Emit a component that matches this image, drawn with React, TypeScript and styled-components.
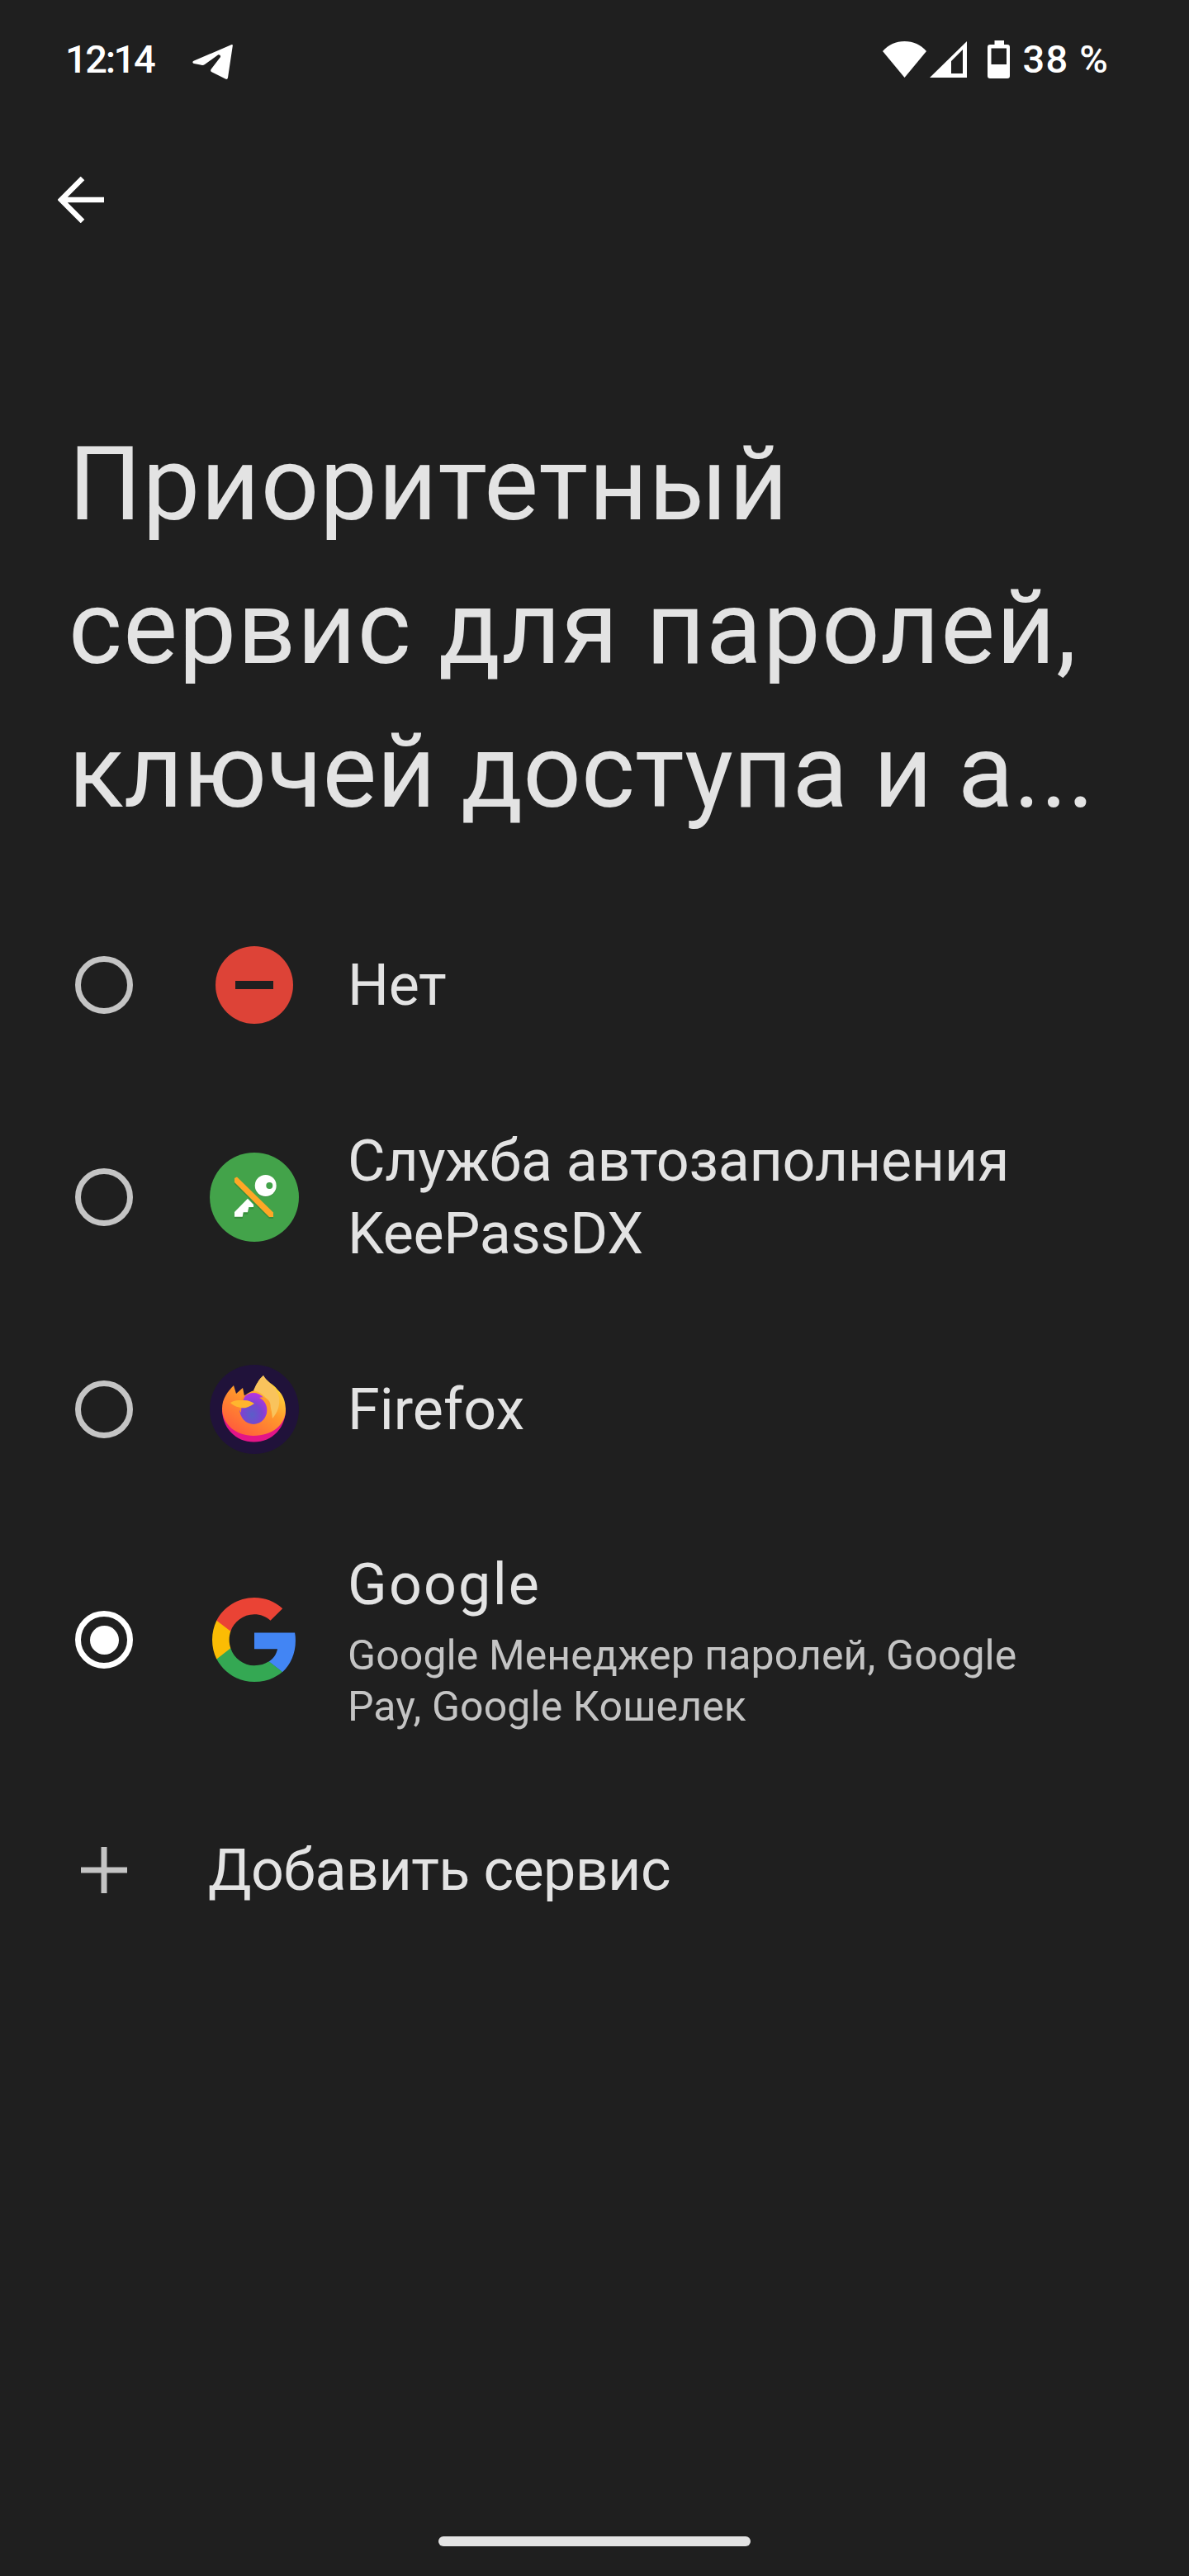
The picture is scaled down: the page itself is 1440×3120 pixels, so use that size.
import React from "react";
import styled, { createGlobalStyle } from "styled-components";

const GlobalStyle = createGlobalStyle`
  html, body {
    margin: 0;
    padding: 0;
    background: #1f1f1f;
  }
`;

const Screen = styled.div`
  width: 1440px;
  height: 3120px;
  display: flex;
  flex-direction: column;
  background: #1f1f1f;
  font-family: Roboto, "Noto Sans", sans-serif;
  overflow: hidden;
`;

const StatusBar = styled.div`
  height: 144px;
  flex: none;
  display: flex;
  align-items: center;
  justify-content: space-between;
  padding: 0 97px 0 79px;
  box-sizing: border-box;
  color: #fff;
`;

const StatusSide = styled.div`
  display: flex;
  align-items: center;
`;

const StatusText = styled.span`
  font-size: 47px;
  font-weight: 500;
  line-height: 56px;
  letter-spacing: -2.4px;
`;

const BatteryText = styled(StatusText)`
  margin-left: 15px;
  letter-spacing: 1.2px;
`;

const TelegramIcon = styled.svg`
  margin: 6px 0 0 47px;
`;

const SignalIcon = styled.svg`
  margin-left: 4px;
`;

const BatteryIcon = styled.svg`
  margin-left: 25px;
`;

const BackButton = styled.div`
  flex: none;
  display: flex;
  padding: 70px 0 0 70px;
`;

const Title = styled.h1`
  margin: 230px 0 56px;
  padding-left: 83px;
  font-weight: 400;
  font-size: 124px;
  line-height: 174px;
  color: #e3e3e3;
  white-space: nowrap;
`;

const TitleLine = styled.div<{ $spacing: number }>`
  letter-spacing: ${(p) => p.$spacing}px;
`;

const List = styled.div`
  display: flex;
  flex-direction: column;
`;

const Row = styled.div<{ $h: number }>`
  height: ${(p) => p.$h}px;
  display: flex;
  align-items: center;
`;

const RadioSlot = styled.div`
  width: 252px;
  flex: none;
  padding-left: 91px;
  box-sizing: border-box;
`;

const Radio = styled.div<{ $on?: boolean }>`
  width: 70px;
  height: 70px;
  box-sizing: border-box;
  border-radius: 50%;
  border: 7px solid ${(p) => (p.$on ? "#fff" : "#c4c4c4")};
  display: flex;
  align-items: center;
  justify-content: center;
`;

const RadioDot = styled.div`
  width: 35px;
  height: 35px;
  border-radius: 50%;
  background: #fff;
`;

const AppIcon = styled.div`
  width: 112px;
  height: 110px;
  flex: none;
  margin-right: 57px;
  display: flex;
  align-items: center;
  justify-content: center;
`;

const Labels = styled.div`
  display: flex;
  flex-direction: column;
  width: 840px;
`;

const Label = styled.div<{ $spacing?: number }>`
  font-size: 70px;
  line-height: 88px;
  letter-spacing: ${(p) => p.$spacing ?? -0.3}px;
  color: #e3e3e3;
`;

const Sub = styled.div`
  margin-top: 11px;
  font-size: 50px;
  line-height: 62px;
  letter-spacing: 0.1px;
  color: #c4c4c4;
`;

const PlusSlot = styled.div`
  width: 252px;
  flex: none;
  display: flex;
  padding-left: 98px;
  box-sizing: border-box;
`;

const Spacer = styled.div`
  flex: 1;
`;

const HomeBar = styled.div`
  width: 378px;
  height: 12px;
  border-radius: 6px;
  background: #e3e3e3;
  margin: 0 auto 36px;
  flex: none;
`;

const Telegram = () => (
  <TelegramIcon width="49" height="42" viewBox="0 0 49 42">
    <path
      fill="#fff"
      d="M47 .3C48.5-.4 49 .6 48.8 1.5L43 40c-.3 2-1.800 2.500-3 1.500L23 33c-1-.8-1.200-2-.3-3.200L34 15c.5-1.800-1.500-3.200-3-2.500L15 24c-1.500 1-2.500 1.200-4 .8L2 23c-2-.8-2.300-2.300-.5-3.300z"
    />
  </TelegramIcon>
);

const Wifi = () => (
  <svg width="53" height="44" viewBox="0 0 53 44">
    <path fill="#fff" d="M26.5 44 0 12C7 4 16 0 26.500 0S46 4 53 12z" />
  </svg>
);

const Signal = () => (
  <SignalIcon width="45" height="44" viewBox="0 0 45 44">
    <path fill="#fff" fillRule="evenodd" d="M45 0v44H0zM40 10 26 24v15h14z" />
  </SignalIcon>
);

const Battery = () => (
  <BatteryIcon width="27" height="46" viewBox="0 0 27 46">
    <path
      fill="#fff"
      fillRule="evenodd"
      d="M8.500 0H20v5h4c2 0 3 1 3 3v35c0 2-1 3-3 3H3c-2 0-3-1-3-3V8c0-2 1-3 3-3h5.500zM4.500 9.500V29H23V9.500z"
    />
  </BatteryIcon>
);

const BackArrow = () => (
  <svg width="56" height="56" viewBox="0 0 56 56">
    <path d="M56 28H5M30 2 4 28l26 26" stroke="#fff" strokeWidth="6.5" fill="none" />
  </svg>
);

const NoneIcon = () => (
  <svg width="94" height="94" viewBox="0 0 94 94">
    <circle cx="47" cy="47" r="47" fill="#dd4337" />
    <rect x="24" y="42" width="46" height="10" fill="#1f1f1f" />
  </svg>
);

const KeyIcon = () => (
  <svg width="108" height="108" viewBox="0 0 108 108">
    <circle cx="54" cy="54" r="54" fill="#43a34a" />
    <path fill="#388e3c" d="M30 36v2l42 42h5v-2z" />
    <path
      fill="#388e3c"
      d="M30 74v6h9.700l1-5.300H46l1.300-6.300H53V66z"
    />
    <circle cx="67.700" cy="41" r="13" fill="#388e3c" />
    <circle cx="67.700" cy="40" r="13" fill="#fff" />
    <circle cx="72.300" cy="40" r="4" fill="#43a34a" />
    <path
      fill="#fff"
      d="M46 55.700 53 63v3h-5.700L46 72.300h-5.300l-1 5.400H30V72z"
    />
    <path fill="#ffa726" d="M30 31l3-1.500L77 72.500V78h-5L30 36z" />
  </svg>
);

const FirefoxIcon = () => (
  <svg width="108" height="108" viewBox="0 0 108 108">
    <defs>
      <linearGradient id="fx" x1="0.850" y1="0.100" x2="0.250" y2="0.950">
        <stop offset="0" stopColor="#ffe03d" />
        <stop offset="0.450" stopColor="#ff9a2b" />
        <stop offset="1" stopColor="#ff5f3a" />
      </linearGradient>
      <radialGradient id="fxGlobe" cx="0.450" cy="0.700" r="0.700">
        <stop offset="0" stopColor="#5a5ec8" />
        <stop offset="0.500" stopColor="#7a45d0" />
        <stop offset="1" stopColor="#b833e1" />
      </radialGradient>
    </defs>
    <circle cx="54" cy="54" r="54" fill="#20123a" />
    <path fill="#e31587" d="M15 52c-.7 24 16 41.500 38.500 41.500S92.700 76 92 52z" />
    <path
      fill="url(#fx)"
      d="M15 53C15 41 22 32 29 25L32 35 40 28 42 38C46 34 50 32 54 31C56 24 60 17 65 13C68 20 78 24 82 30C89 36 92 45 92 55C92 72 76 86 53 86C32 86 15 72 15 53z"
    />
    <path
      fill="#f9c35c"
      d="M53 31C56 24 60 17 65 13C70 22 82 28 84 40C85 50 82 58 76 65C75 50 70 36 56 32z"
    />
    <ellipse cx="53" cy="53" rx="17" ry="19" fill="url(#fxGlobe)" />
    <path fill="#ff9a2b" d="M60 40C70 44 72 58 66 66C72 60 76 50 72 44C69 40 64 38 60 40z" />
    <path fill="#ff8a2b" d="M36 48C38 42 40 38 44 36C40 42 38 50 38 58C36 56 35 52 36 48z" />
    <path fill="#ffb52e" d="M25 46C30 42 38 43 42 43C47 43 51 45 54 47C49 50 47 51 44 52C38 53 30 51 25 46z" />
  </svg>
);

const GoogleIcon = () => (
  <svg width="102" height="104" viewBox="0 0 48 48">
    <path fill="#4285f4" d="M47.500 24.500c0-1.600-.1-3.100-.4-4.500H24v9.300h13.200c-.6 3-2.300 5.500-4.900 7.200l7.700 6c4.600-4.200 7.500-10.400 7.500-18z" />
    <path fill="#34a853" d="M24 48c6.500 0 11.900-2.100 16-5.600l-7.700-6c-2.200 1.500-5 2.300-8.300 2.300-6.300 0-11.600-4.200-13.500-9.900l-8-.1v6.200C6.500 42.600 14.600 48 24 48z" />
    <path fill="#fbbc04" d="M10.500 28.800C10 27.300 9.700 25.700 9.700 24s.3-3.300.8-4.800v-6.200h-8C.9 16.300 0 20 0 24s.9 7.700 2.500 11z" />
    <path fill="#ea4335" d="M24 9.500c3.500 0 6.700 1.200 9.200 3.600l6.900-6.900C35.900 2.400 30.500 0 24 0 14.600 0 6.500 5.400 2.500 13l8 6.200C12.400 13.700 17.700 9.500 24 9.500z" />
  </svg>
);

export default function App() {
  return (
    <Screen>
      <GlobalStyle />
      <StatusBar>
        <StatusSide>
          <StatusText>12:14</StatusText>
          <Telegram />
        </StatusSide>
        <StatusSide>
          <Wifi />
          <Signal />
          <Battery />
          <BatteryText>38 %</BatteryText>
        </StatusSide>
      </StatusBar>
      <BackButton>
        <BackArrow />
      </BackButton>
      <Title>
        <TitleLine $spacing={1}>Приоритетный</TitleLine>
        <TitleLine $spacing={1.4}>сервис для паролей,</TitleLine>
        <TitleLine $spacing={0}>ключей доступа и а...</TitleLine>
      </Title>
      <List>
        <Row $h={230}>
          <RadioSlot><Radio /></RadioSlot>
          <AppIcon><NoneIcon /></AppIcon>
          <Labels><Label>Нет</Label></Labels>
        </Row>
        <Row $h={284}>
          <RadioSlot><Radio /></RadioSlot>
          <AppIcon><KeyIcon /></AppIcon>
          <Labels><Label>Служба автозаполнения KeePassDX</Label></Labels>
        </Row>
        <Row $h={230}>
          <RadioSlot><Radio /></RadioSlot>
          <AppIcon><FirefoxIcon /></AppIcon>
          <Labels><Label $spacing={0}>Firefox</Label></Labels>
        </Row>
        <Row $h={328}>
          <RadioSlot><Radio $on><RadioDot /></Radio></RadioSlot>
          <AppIcon><GoogleIcon /></AppIcon>
          <Labels>
            <Label $spacing={2.2}>Google</Label>
            <Sub>Google Менеджер паролей, Google Pay, Google Кошелек</Sub>
          </Labels>
        </Row>
        <Row $h={230}>
          <PlusSlot>
            <svg width="56" height="56" viewBox="0 0 56 56">
              <path d="M28 0v56M0 28h56" stroke="#c4c4c4" strokeWidth="7" />
            </svg>
          </PlusSlot>
          <Label $spacing={-0.6}>Добавить сервис</Label>
        </Row>
      </List>
      <Spacer />
      <HomeBar />
    </Screen>
  );
}
